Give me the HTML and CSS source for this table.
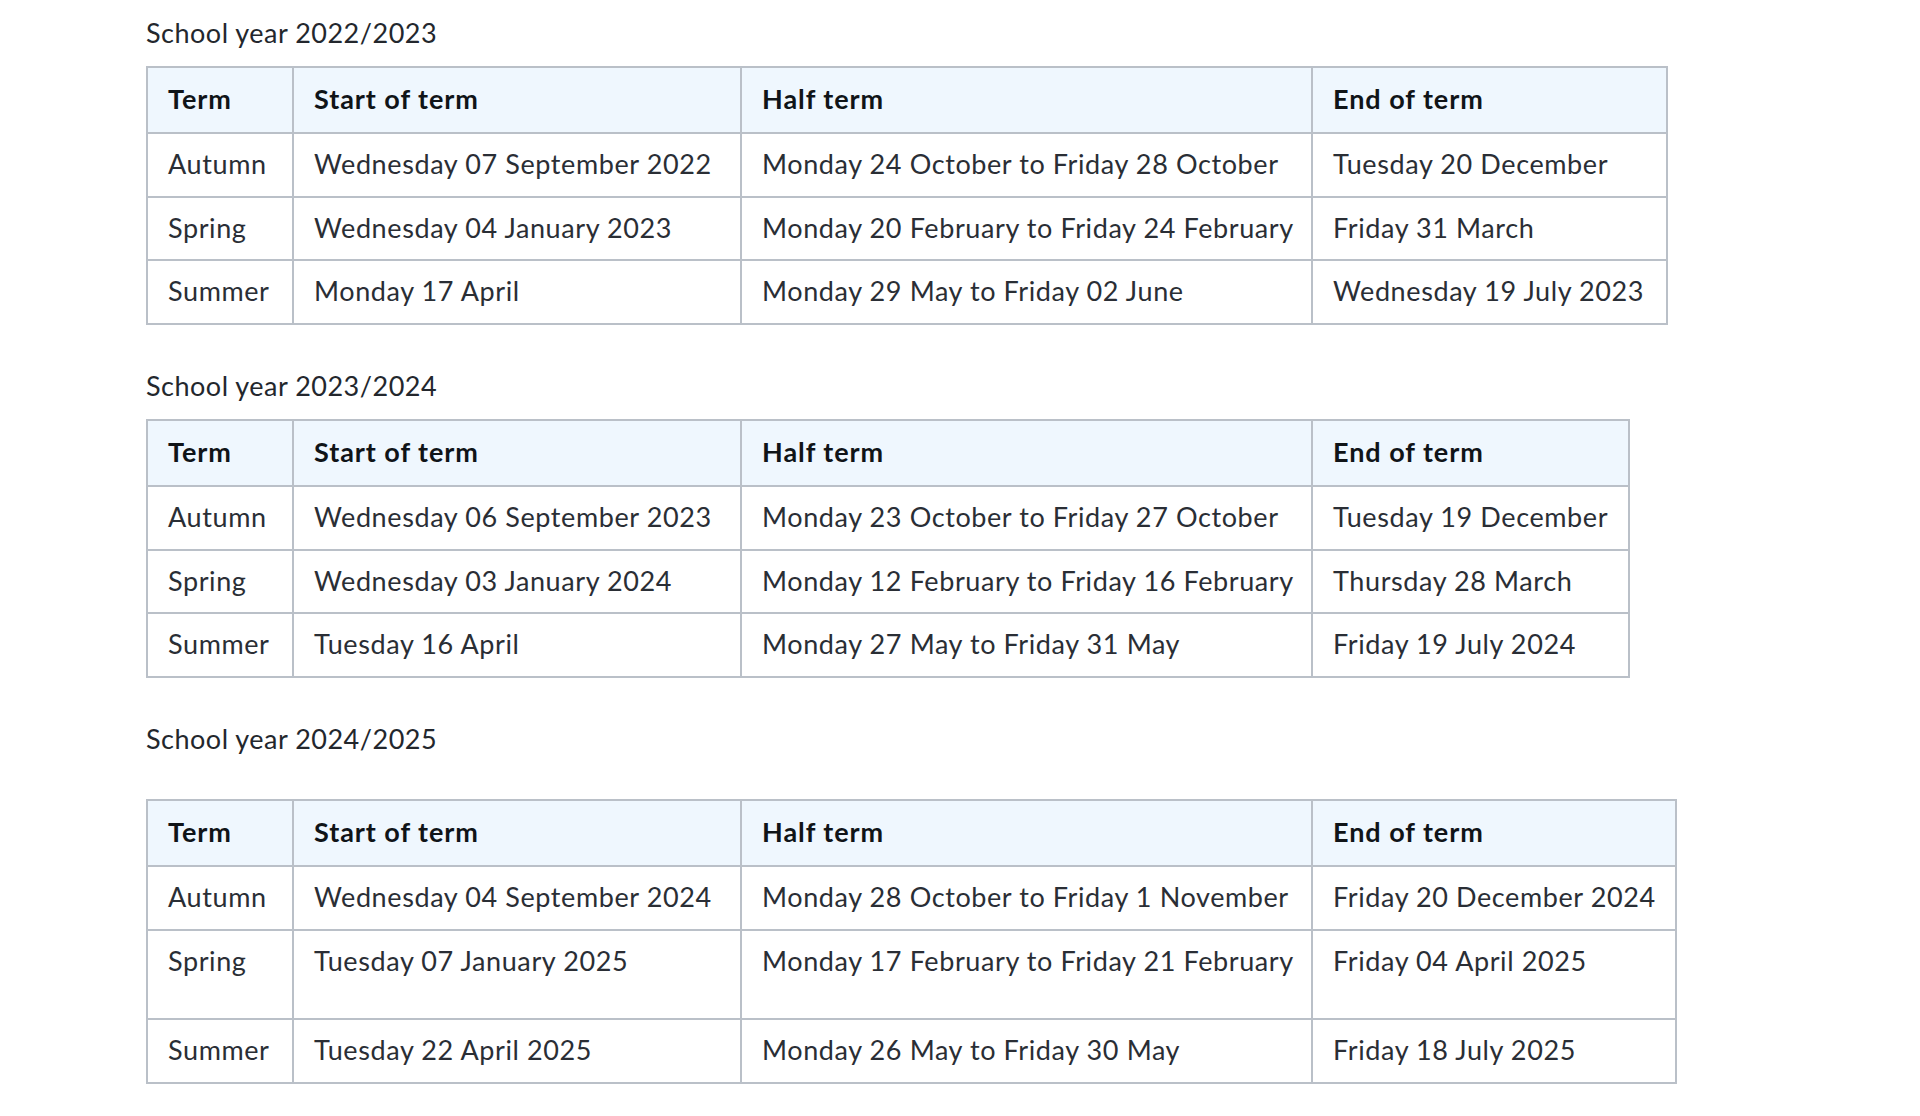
FILE: index.html
```html
<!DOCTYPE html>
<html lang="en">
<head>
<meta charset="utf-8">
<title>Term dates</title>
<link rel="stylesheet" href="styles.css">
</head>
<body>
<main class="page">
  <p class="year-title">School year 2022/2023</p>
  <table class="terms terms-a">
    <thead>
      <tr><th class="c1">Term</th><th class="c2">Start of term</th><th class="c3">Half term</th><th class="c4">End of term</th></tr>
    </thead>
    <tbody>
      <tr><td>Autumn</td><td>Wednesday 07 September 2022</td><td>Monday 24 October to Friday 28 October</td><td>Tuesday 20 December</td></tr>
      <tr><td>Spring</td><td>Wednesday 04 January 2023</td><td>Monday 20 February to Friday 24 February</td><td>Friday 31 March</td></tr>
      <tr><td>Summer</td><td>Monday 17 April</td><td>Monday 29 May to Friday 02 June</td><td>Wednesday 19 July 2023</td></tr>
    </tbody>
  </table>

  <p class="year-title">School year 2023/2024</p>
  <table class="terms terms-b">
    <thead>
      <tr><th class="c1">Term</th><th class="c2">Start of term</th><th class="c3">Half term</th><th class="c4">End of term</th></tr>
    </thead>
    <tbody>
      <tr><td>Autumn</td><td>Wednesday 06 September 2023</td><td>Monday 23 October to Friday 27 October</td><td>Tuesday 19 December</td></tr>
      <tr><td>Spring</td><td>Wednesday 03 January 2024</td><td>Monday 12 February to Friday 16 February</td><td>Thursday 28 March</td></tr>
      <tr><td>Summer</td><td>Tuesday 16 April</td><td>Monday 27 May to Friday 31 May</td><td>Friday 19 July 2024</td></tr>
    </tbody>
  </table>

  <p class="year-title year-title-spaced">School year 2024/2025</p>
  <table class="terms terms-c">
    <thead>
      <tr><th class="c1">Term</th><th class="c2">Start of term</th><th class="c3">Half term</th><th class="c4">End of term</th></tr>
    </thead>
    <tbody>
      <tr><td>Autumn</td><td>Wednesday 04 September 2024</td><td>Monday 28 October to Friday 1 November</td><td>Friday 20 December 2024</td></tr>
      <tr class="tall"><td>Spring</td><td>Tuesday 07 January 2025</td><td>Monday 17 February to Friday 21 February</td><td>Friday 04 April 2025</td></tr>
      <tr><td>Summer</td><td>Tuesday 22 April 2025</td><td>Monday 26 May to Friday 30 May</td><td>Friday 18 July 2025</td></tr>
    </tbody>
  </table>
</main>
</body>
</html>
```

FILE: styles.css
```css
html, body {
  margin: 0;
  padding: 0;
  background: #ffffff;
}

body {
  font-family: Lato, "Noto Sans", "Liberation Sans", sans-serif;
  color: #262a30;
}

.page {
  padding: 13px 0 40px 146px;
}

.year-title {
  margin: 0 0 13px 0;
  font-size: 27px;
  line-height: 40px;
  letter-spacing: 0.5px;
  color: #23272d;
}

.year-title-spaced {
  margin-bottom: 40px;
}

.terms {
  border-collapse: separate;
  border-spacing: 0;
  table-layout: fixed;
  border-top: 2px solid #bac0c8;
  border-left: 2px solid #bac0c8;
  margin: 0 0 41px 0;
  font-size: 27px;
  letter-spacing: 0.6px;
}

.terms-a { width: 1522px; }
.terms-b { width: 1484px; }
.terms-c { width: 1531px; }

.terms th,
.terms td {
  box-sizing: border-box;
  border-right: 2px solid #bac0c8;
  border-bottom: 2px solid #bac0c8;
  text-align: left;
  vertical-align: top;
  line-height: 32px;
  white-space: nowrap;
}

.terms th {
  background: #eff7fe;
  color: #101418;
  font-weight: 700;
  padding: 15px 20px 17px 20px;
  letter-spacing: 0.95px;
}

.terms td {
  padding: 14px 20px 15.7px 20px;
  font-weight: 400;
  color: #2a2e35;
}

.terms .tall td {
  padding-bottom: 41.4px;
}

.c1 { width: 146px; }
.c2 { width: 448px; }
.c3 { width: 571px; }
.terms-a .c4 { width: 355px; }
.terms-b .c4 { width: 317px; }
.terms-c .c4 { width: 364px; }
```
